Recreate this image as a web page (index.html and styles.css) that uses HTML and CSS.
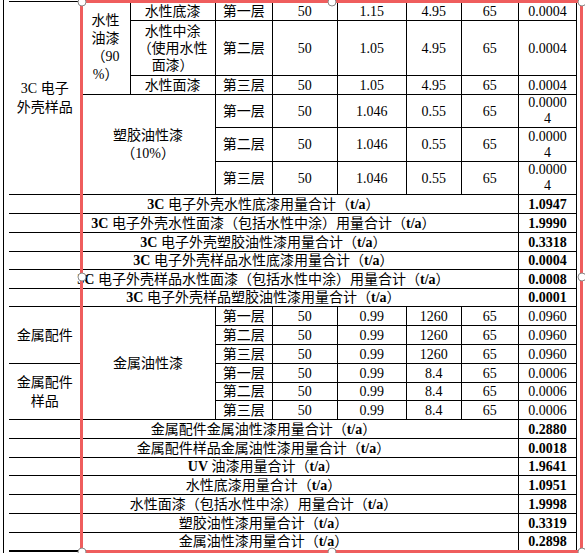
FILE: index.html
```html
<!DOCTYPE html>
<html lang="zh-CN">
<head>
<meta charset="utf-8">
<title>用量表</title>
<link rel="stylesheet" href="styles.css">
</head>
<body>
<div class="page">
<table class="usage">
  <colgroup>
    <col class="w1"><col class="w2"><col class="w3"><col class="w4"><col class="w5"><col class="w6"><col class="w7"><col class="w8"><col class="w9">
  </colgroup>
  <tbody>
    <tr class="r19">
      <td rowspan="6" class="lh19">3C 电子<br>外壳样品</td>
      <td rowspan="3" class="lh18">水性<br>油漆<br>（90<br>%）</td>
      <td>水性底漆</td><td>第一层</td><td>50</td><td>1.15</td><td>4.95</td><td>65</td><td>0.0004</td>
    </tr>
    <tr class="r55">
      <td>水性中涂<br>（使用水性<br>面漆）</td><td>第二层</td><td>50</td><td>1.05</td><td>4.95</td><td>65</td><td>0.0004</td>
    </tr>
    <tr class="r19">
      <td>水性面漆</td><td>第三层</td><td>50</td><td>1.05</td><td>4.95</td><td>65</td><td>0.0004</td>
    </tr>
    <tr class="r33">
      <td colspan="2" rowspan="3" class="lh18">塑胶油性漆<br>（10%）</td>
      <td>第一层</td><td>50</td><td>1.046</td><td>0.55</td><td>65</td><td class="lh16">0.0000<br>4</td>
    </tr>
    <tr class="r34">
      <td>第二层</td><td>50</td><td>1.046</td><td>0.55</td><td>65</td><td class="lh16">0.0000<br>4</td>
    </tr>
    <tr class="r32">
      <td>第三层</td><td>50</td><td>1.046</td><td>0.55</td><td>65</td><td class="lh16">0.0000<br>4</td>
    </tr>

    <tr class="r19"><td colspan="8"><b>3C</b> 电子外壳水性底漆用量合计（<b>t/a</b>）</td><td class="val">1.0947</td></tr>
    <tr class="r19"><td colspan="8"><b>3C</b> 电子外壳水性面漆（包括水性中涂）用量合计（<b>t/a</b>）</td><td class="val">1.9990</td></tr>
    <tr class="r19"><td colspan="8"><b>3C</b> 电子外壳塑胶油性漆用量合计（<b>t/a</b>）</td><td class="val">0.3318</td></tr>
    <tr class="r18"><td colspan="8"><b>3C</b> 电子外壳样品水性底漆用量合计（<b>t/a</b>）</td><td class="val">0.0004</td></tr>
    <tr class="r19"><td colspan="8"><b>3C</b> 电子外壳样品水性面漆（包括水性中涂）用量合计（<b>t/a</b>）</td><td class="val">0.0008</td></tr>
    <tr class="r18"><td colspan="8"><b>3C</b> 电子外壳样品塑胶油性漆用量合计（<b>t/a</b>）</td><td class="val">0.0001</td></tr>

    <tr class="r19">
      <td rowspan="3">金属配件</td>
      <td colspan="2" rowspan="6">金属油性漆</td>
      <td>第一层</td><td>50</td><td>0.99</td><td>1260</td><td>65</td><td>0.0960</td>
    </tr>
    <tr class="r19"><td>第二层</td><td>50</td><td>0.99</td><td>1260</td><td>65</td><td>0.0960</td></tr>
    <tr class="r19"><td>第三层</td><td>50</td><td>0.99</td><td>1260</td><td>65</td><td>0.0960</td></tr>
    <tr class="r19">
      <td rowspan="3" class="lh19">金属配件<br>样品</td>
      <td>第一层</td><td>50</td><td>0.99</td><td>8.4</td><td>65</td><td>0.0006</td>
    </tr>
    <tr class="r18"><td>第二层</td><td>50</td><td>0.99</td><td>8.4</td><td>65</td><td>0.0006</td></tr>
    <tr class="r19"><td>第三层</td><td>50</td><td>0.99</td><td>8.4</td><td>65</td><td>0.0006</td></tr>

    <tr class="r19"><td colspan="8">金属配件金属油性漆用量合计（<b>t/a</b>）</td><td class="val">0.2880</td></tr>
    <tr class="r19"><td colspan="8">金属配件样品金属油性漆用量合计（<b>t/a</b>）</td><td class="val">0.0018</td></tr>
    <tr class="r18"><td colspan="8"><b>UV</b> 油漆用量合计（<b>t/a</b>）</td><td class="val">1.9641</td></tr>
    <tr class="r19"><td colspan="8">水性底漆用量合计（<b>t/a</b>）</td><td class="val">1.0951</td></tr>
    <tr class="r19"><td colspan="8">水性面漆（包括水性中涂）用量合计（<b>t/a</b>）</td><td class="val">1.9998</td></tr>
    <tr class="r19"><td colspan="8">塑胶油性漆用量合计（<b>t/a</b>）</td><td class="val">0.3319</td></tr>
    <tr class="r18"><td colspan="8">金属油性漆用量合计（<b>t/a</b>）</td><td class="val">0.2898</td></tr>
  </tbody>
</table>
</div>

<div class="sel">
  <span class="handle h-tl"></span>
  <span class="handle h-tm"></span>
  <span class="handle h-tr"></span>
  <span class="handle h-ml"></span>
  <span class="handle h-mr"></span>
  <span class="handle h-bl"></span>
  <span class="handle h-bm"></span>
  <span class="handle h-br"></span>
</div>
</body>
</html>
```

FILE: styles.css
```css
html, body {
  margin: 0;
  padding: 0;
  background: #fff;
}

body {
  width: 585px;
  height: 553px;
  overflow: hidden;
  font-family: "Liberation Serif", "Noto Sans CJK SC", serif;
  font-size: 14px;
  color: #000;
}

.page {
  margin-left: 3px;
  border-left: 1px solid #000;
  height: 553px;
  box-sizing: border-box;
  padding-top: 1px;
}

.usage {
  border-collapse: collapse;
  table-layout: fixed;
  width: 568px;
  margin-left: 5px;
  border-left: hidden;
  border-bottom: 2px solid #000;
}

.w1 { width: 72px; }
.w2 { width: 49px; }
.w3 { width: 85px; }
.w4 { width: 57px; }
.w5 { width: 65px; }
.w6 { width: 69px; }
.w7 { width: 55px; }
.w8 { width: 57px; }
.w9 { width: 58px; }

.usage td {
  border: 1px solid #000;
  padding: 0 2px;
  text-align: center;
  vertical-align: middle;
  line-height: 17px;
  white-space: nowrap;
  overflow: visible;
}

.usage b { font-weight: bold; }

.usage td.val { font-weight: bold; }

.usage td.lh19 { line-height: 19px; }
.usage td.lh18 { line-height: 18px; }
.usage td.lh16 { line-height: 16px; }

.r18 { height: 18px; }
.r19 { height: 19px; }
.r32 { height: 32px; }
.r33 { height: 33px; }
.r34 { height: 34px; }
.r55 { height: 55px; }

.sel {
  position: absolute;
  left: 80px;
  top: 0;
  width: 503px;
  height: 553px;
  box-sizing: border-box;
  border: 3px solid #ef5d5d;
  pointer-events: none;
}

.handle {
  position: absolute;
  width: 7px;
  height: 7px;
  border-radius: 50%;
  background: #fff;
  border: 1px solid #8a8a8a;
  transform: translate(-50%, -50%);
}

.h-tl { left: -1.5px; top: -1.5px; }
.h-tm { left: 50%; top: -1.5px; }
.h-tr { left: calc(100% + 1.5px); top: -1.5px; }
.h-ml { left: -1.5px; top: 50%; }
.h-mr { left: calc(100% + 1.5px); top: 50%; }
.h-bl { left: -1.5px; top: calc(100% + 1.5px); }
.h-bm { left: 50%; top: calc(100% + 1.5px); }
.h-br { left: calc(100% + 1.5px); top: calc(100% + 1.5px); }
```
